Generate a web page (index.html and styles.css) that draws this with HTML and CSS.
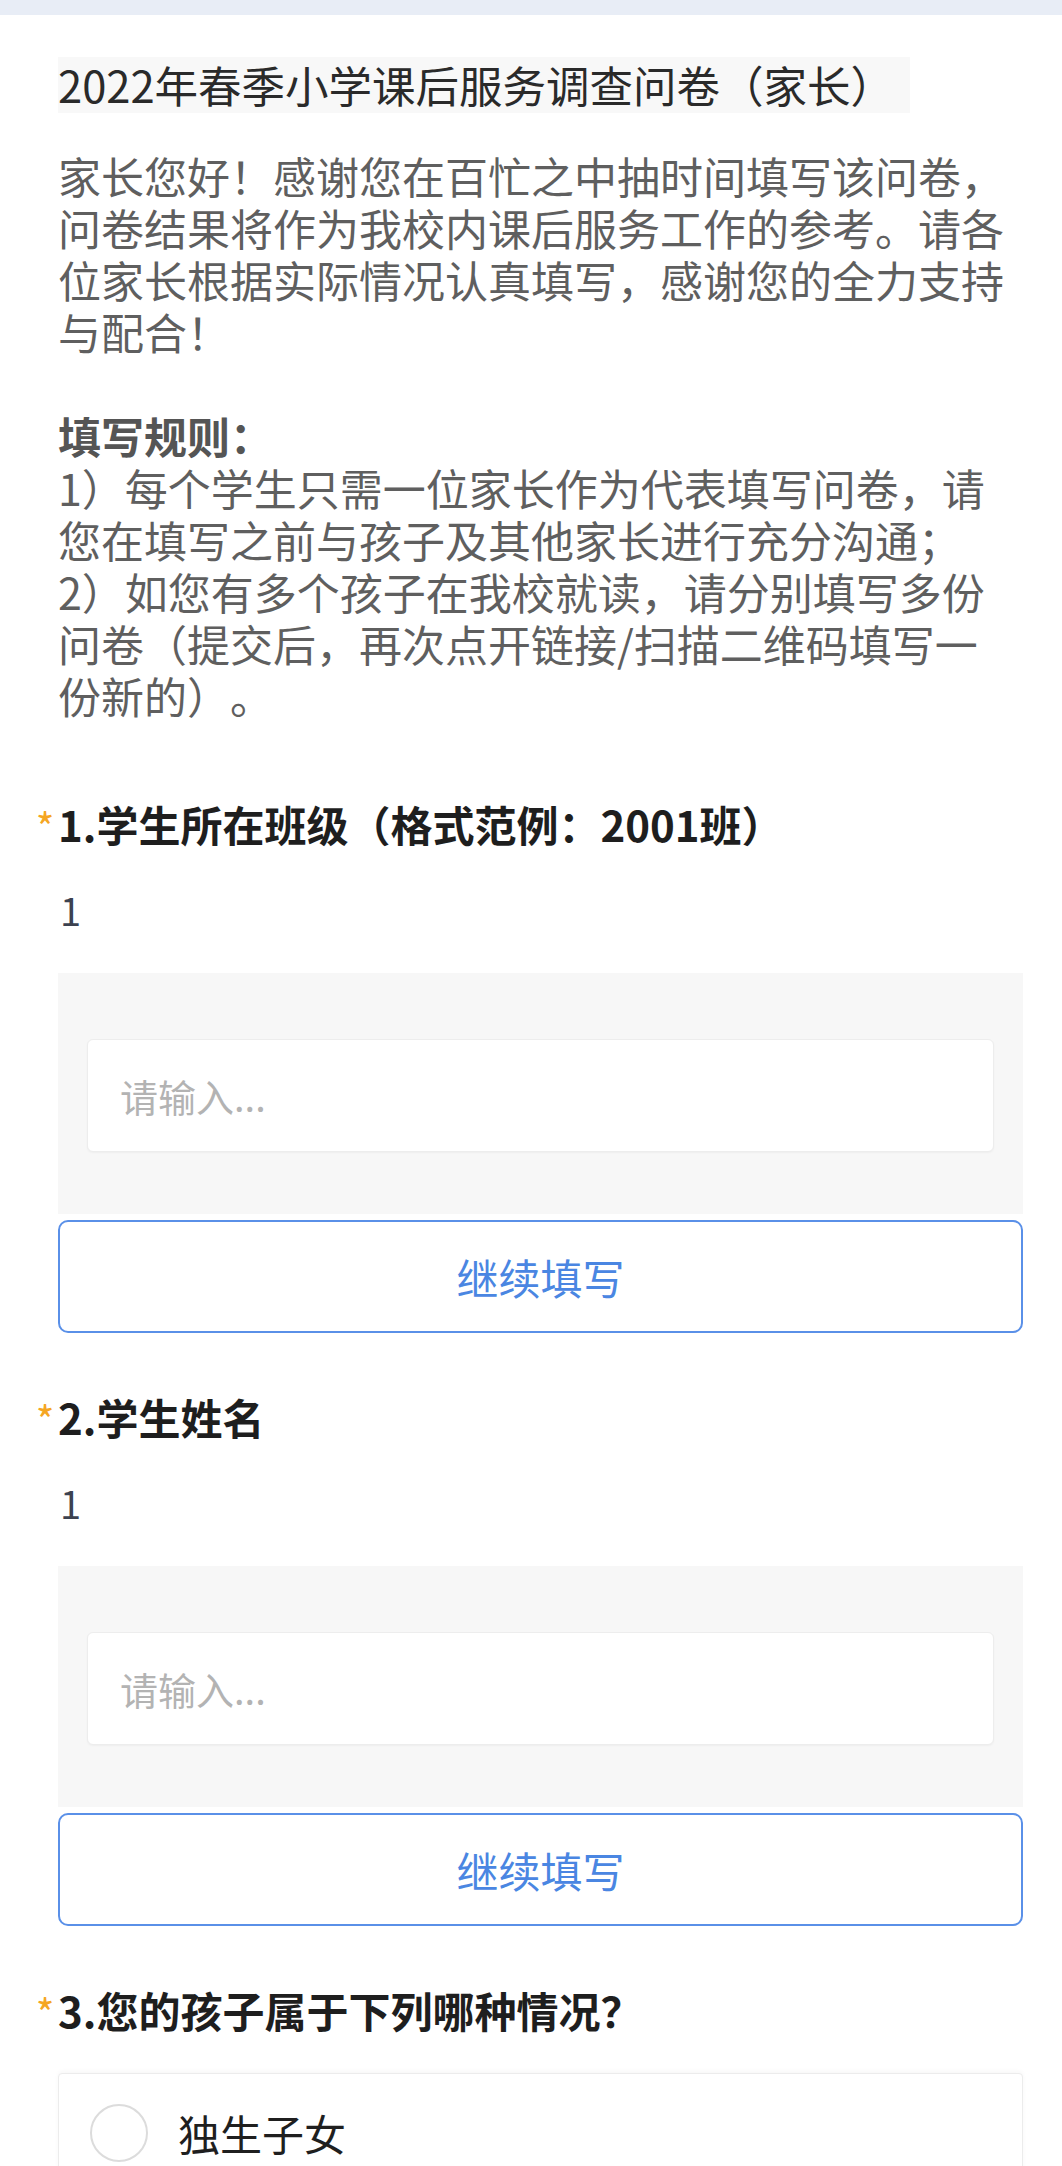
FILE: index.html
```html
<!DOCTYPE html>
<html lang="zh-CN">
<head>
<meta charset="utf-8">
<title>2022年春季小学课后服务调查问卷（家长）</title>
<link rel="stylesheet" href="styles.css">
</head>
<body>
<div class="topbar"></div>
<main class="survey">
  <header class="survey-head">
    <h1 class="survey-title">2022年春季小学课后服务调查问卷（家长）</h1>
    <p class="survey-desc">家长您好！感谢您在百忙之中抽时间填写该问卷，问卷结果将作为我校内课后服务工作的参考。请各位家长根据实际情况认真填写，感谢您的全力支持与配合！<br><br><strong class="survey-rules">填写规则：</strong><br>1）每个学生只需一位家长作为代表填写问卷，请您在填写之前与孩子及其他家长进行充分沟通；<br>2）如您有多个孩子在我校就读，请分别填写多份问卷（提交后，再次点开链接/扫描二维码填写一份新的）。</p>
  </header>

  <section class="question">
    <h2 class="q-title"><span class="q-star">*</span>1.学生所在班级（格式范例：2001班）</h2>
    <div class="q-answer">1</div>
    <div class="q-inputbox">
      <div class="q-input">请输入...</div>
    </div>
    <button class="q-continue" type="button">继续填写</button>
  </section>

  <section class="question">
    <h2 class="q-title"><span class="q-star">*</span>2.学生姓名</h2>
    <div class="q-answer">1</div>
    <div class="q-inputbox">
      <div class="q-input">请输入...</div>
    </div>
    <button class="q-continue" type="button">继续填写</button>
  </section>

  <section class="question">
    <h2 class="q-title"><span class="q-star">*</span>3.您的孩子属于下列哪种情况？</h2>
    <div class="q-options">
      <label class="q-option"><span class="q-radio"></span><span class="q-option-text">独生子女</span></label>
    </div>
  </section>
</main>
</body>
</html>
```

FILE: styles.css
```css
html, body {
  margin: 0;
  padding: 0;
  background: #ffffff;
}

body {
  font-family: "Noto Sans CJK SC", "Noto Sans", sans-serif;
  width: 1062px;
  height: 2166px;
  overflow: hidden;
  text-spacing-trim: space-all;
}

.topbar {
  height: 15px;
  background: #e8edf6;
}

.survey {
  padding: 0 39px 0 58px;
}

.survey-head {
  padding-top: 42px;
}

.survey-title {
  display: inline-block;
  margin: 0;
  padding: 0 16px 0 0;
  font-size: 43.5px;
  font-weight: 400;
  line-height: 56px;
  color: #2a2a2a;
  background: #f8f8f8;
}

.survey-desc {
  margin: 36px 0 0;
  width: 955px;
  font-size: 43px;
  line-height: 52px;
  color: #5f5f5f;
}

.survey-rules {
  font-weight: 600;
  color: #555555;
}

.question {
  display: flex;
  flex-direction: column;
}

.question:first-of-type {
  margin-top: 75px;
}

.question + .question {
  margin-top: 56px;
}

.q-title {
  margin: 0;
  height: 56px;
  font-size: 42px;
  font-weight: 600;
  line-height: 56px;
  color: #1e1e1e;
  display: flex;
  align-items: flex-start;
}

.q-star {
  width: 22px;
  margin-left: -24px;
  margin-right: 2px;
  margin-top: 5px;
  font-size: 40px;
  line-height: 51px;
  font-weight: 400;
  color: #f5a623;
  text-align: center;
}

.q-answer {
  margin-top: 33px;
  padding-left: 2px;
  font-size: 38px;
  line-height: 50px;
  color: #3c4250;
}

.q-inputbox {
  margin-top: 38px;
  padding: 66px 29px 62px;
  background: #f7f7f7;
}

.q-input {
  height: 111px;
  padding-left: 32px;
  display: flex;
  align-items: center;
  background: #ffffff;
  border: 1px solid #ededed;
  border-radius: 6px;
  box-shadow: 0 1px 2px rgba(0, 0, 0, 0.04);
  font-size: 38px;
  color: #b3b3b3;
}

.q-continue {
  margin-top: 6px;
  height: 113px;
  width: 100%;
  background: #ffffff;
  border: 2px solid #5a90e8;
  border-radius: 10px;
  font-family: inherit;
  font-size: 42px;
  color: #4a86e2;
  cursor: pointer;
}

.q-options {
  margin-top: 35px;
}

.q-option {
  display: flex;
  gap: 30px;
  height: 150px;
  padding: 30px 31px 0;
  align-items: flex-start;
  box-sizing: border-box;
  background: #ffffff;
  border: 1px solid #ececec;
  border-radius: 4px;
  box-shadow: 0 -2px 4px rgba(0, 0, 0, 0.03);
}

.q-radio {
  flex: none;
  width: 54px;
  height: 54px;
  border: 2px solid #dcdcdc;
  border-radius: 50%;
}

.q-option-text {
  font-size: 42px;
  line-height: 58px;
  color: #1f1f1f;
}
```
